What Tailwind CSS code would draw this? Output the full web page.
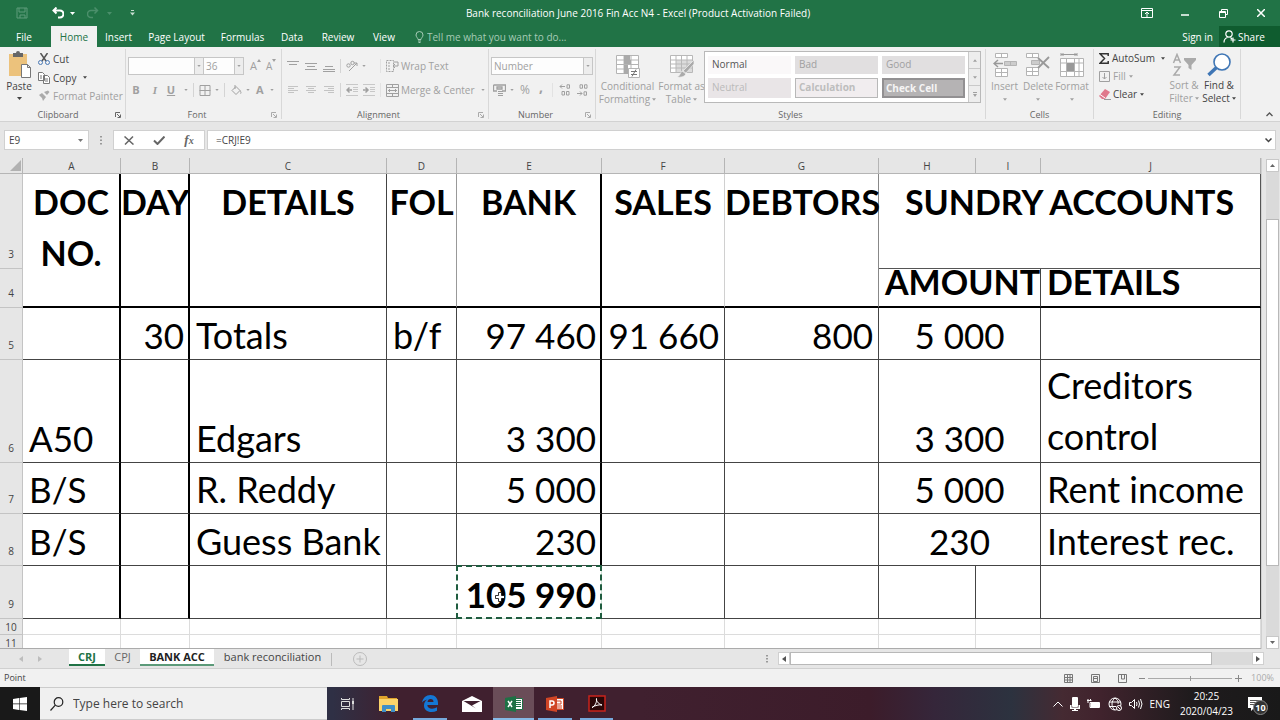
<!DOCTYPE html>
<html lang="en">
<head>
  <meta charset="UTF-8">
  <meta name="viewport" content="width=device-width, initial-scale=1.0">
  <title>Bank reconciliation June 2016 Fin Acc N4 - Excel</title>
  <script src="https://cdn.jsdelivr.net/npm/@tailwindcss/browser@4"></script>
</head>
<body class="h-screen flex flex-col overflow-hidden bg-[#e6e6e6] text-[11px] leading-[14px] text-[#444] font-['Open_Sans','Noto_Sans',sans-serif]">
  <!-- Shared icons -->
  <svg class="hidden">
    <symbol id="caret" viewBox="0 0 5 3"><path d="M0 0h5L2.5 3z" fill="currentColor"/></symbol>
    <symbol id="launcher" viewBox="0 0 6 6"><path d="M.5 5V.5H5M2 2l3 3M5.500 2.500v3h-3" fill="none" stroke="currentColor"/></symbol>
  </svg>

  <!-- Title bar -->
  <header class="bg-[#217346] text-white shrink-0">
    <div class="h-[26px] flex items-center">
      <div class="flex-1 flex items-center pl-4">
        <button aria-label="Save" class="w-[36px] text-[#5f9c7b]">
          <svg class="w-3 h-3" viewBox="0 0 12 12" fill="none" stroke="currentColor"><path d="M1 1h10v10H1zM3 1v4h6V1M4 11V8h5v3"/></svg>
        </button>
        <button aria-label="Undo" class="w-[18px]">
          <svg class="w-3 h-3" viewBox="0 0 12 12" fill="none" stroke="currentColor" stroke-width="2"><path d="M4.500 .5L1.500 3.500l3 3M1.500 3.500H8a3 3 0 0 1 0 7H6"/></svg>
        </button>
        <svg class="w-[5px] h-[3px]"><use href="#caret"/></svg>
        <button aria-label="Redo" class="w-[20px] ml-3 text-[#4b8f6b]">
          <svg class="w-3 h-3" viewBox="0 0 12 12" fill="none" stroke="currentColor" stroke-width="1.500"><path d="M7.500 .5l3 3-3 3M10.500 3.500H4a3 3 0 0 0 0 7h2"/></svg>
        </button>
        <svg class="w-[5px] h-[3px] text-[#4b8f6b]"><use href="#caret"/></svg>
        <button aria-label="Customize Quick Access Toolbar" class="ml-[18px] text-[#c5dccf]">
          <svg class="w-[5px] h-[6px]" viewBox="0 0 5 6" fill="currentColor"><path d="M1 0h3v1H1zM0 2.500h5L2.500 5.500z"/></svg>
        </button>
      </div>
      <h1 class="text-[10px] pr-5">Bank reconciliation June 2016 Fin Acc N4 - Excel (Product Activation Failed)</h1>
      <div class="flex-1 flex justify-end items-center">
        <button aria-label="Ribbon Display Options" class="w-[38px]">
          <svg class="w-3 h-3 mx-auto" viewBox="0 0 12 12" fill="none" stroke="currentColor"><path d="M.5 1.500h11v9H.5zM.5 3.500h11M6 10V5M4 7l2-2 2 2"/></svg>
        </button>
        <button aria-label="Minimize" class="w-[38px]">
          <svg class="w-2 h-3 mx-auto" viewBox="0 0 8 12" stroke="currentColor" stroke-width="1.500"><path d="M0 8h8"/></svg>
        </button>
        <button aria-label="Restore" class="w-[38px]">
          <svg class="w-[9px] h-[9px] mx-auto" viewBox="0 0 9 9" fill="none" stroke="currentColor"><path d="M.5 2.500h6v6h-6zM.5 3.500h6M2.500 2V.5h6v5H7"/></svg>
        </button>
        <button aria-label="Close" class="w-[38px]">
          <svg class="w-2 h-2 mx-auto" viewBox="0 0 8 8" stroke="currentColor" stroke-width="1.500"><path d="M0 0l8 8M8 0L0 8"/></svg>
        </button>
      </div>
    </div>

    <!-- Ribbon tabs -->
    <nav class="h-[21px] flex items-stretch text-[10px]">
      <button class="w-[51px] pr-[3px]">File</button>
      <button class="w-[46px] bg-[#f1f1f1] text-[#217346]">Home</button>
      <button class="w-[43px]">Insert</button>
      <button class="w-[73px] whitespace-nowrap">Page Layout</button>
      <button class="w-[59px]">Formulas</button>
      <button class="w-[40px]">Data</button>
      <button class="w-[52px]">Review</button>
      <button class="w-[40px]">View</button>
      <label class="flex items-center flex-1 pl-[11px] text-[#a6cbb6]">
        <svg class="w-[9px] h-3 mr-[3px]" viewBox="0 0 9 12" fill="none" stroke="currentColor"><path d="M3 8.500C3 7 1 6 1 4a3.500 3.500 0 0 1 7 0c0 2-2 3-2 4.500zM3 10h3M3.500 11.500h2"/></svg>
        <input type="text" aria-label="Tell me" placeholder="Tell me what you want to do..." class="w-[180px] outline-none placeholder:text-[#a6cbb6]">
      </label>
      <button class="px-[6px]">Sign in</button>
      <button class="w-[61px] bg-[#0f5c2f] flex items-center gap-[2px] pl-1">
        <svg class="w-[13px] h-[13px]" viewBox="0 0 13 13" fill="none" stroke="currentColor" stroke-width="1.200"><circle cx="6" cy="4" r="3.200"/><path d="M1 12.500c0-3 1.500-4.500 3.500-5M7.500 7.500L9 9M10 7.500v5M7.500 10h5"/></svg>
        Share
      </button>
    </nav>
  </header>

  <!-- Ribbon -->
  <section class="h-[75px] shrink-0 flex bg-[#f1f1f1] border-b border-[#d2d2d2] text-[#a0a0a0] whitespace-nowrap">
    <!-- Clipboard -->
    <div class="w-[125px] flex flex-col my-[2px]">
      <div class="flex-1 flex">
        <button class="w-[38px] pt-[2px] flex flex-col items-center text-[#444]">
          <svg class="w-6 h-7" viewBox="0 0 24 28"><path fill="#ecc27c" d="M2 3h18v22H2z"/><path fill="#666" d="M6 2h3a2 2 0 0 1 4 0h3v4H6z"/><path fill="#fff" stroke="#777" d="M14.500 13.500h6l3 3v10h-9zM20.500 13.500v3h3"/></svg>
          <span class="text-[10px]">Paste</span>
          <svg class="w-[5px] h-[3px] mt-1"><use href="#caret"/></svg>
        </button>
        <div class="flex flex-col pt-px text-[10px]">
          <button class="h-[18px] flex items-center gap-[3px] text-[#444]">
            <svg class="w-3 h-3" viewBox="0 0 12 12" fill="none"><path d="M2.500 0L8 8M9.500 0L4 8" stroke="#555" stroke-width="1.500"/><circle cx="2.500" cy="9.500" r="2" stroke="#4a79b5"/><circle cx="9.500" cy="9.500" r="2" stroke="#4a79b5"/></svg>
            Cut
          </button>
          <button class="h-[19px] flex items-center gap-[3px] text-[#444]">
            <svg class="w-3 h-3" viewBox="0 0 12 12" fill="#fff" stroke="#777"><path d="M.5 .5h4l2 2v6h-6zM2 4h2M2 6h2M5.500 3.500h4l2 2v6h-6zM7 7h3M7 9h3"/></svg>
            Copy
            <svg class="w-1 h-[3px] ml-1"><use href="#caret"/></svg>
          </button>
          <button class="h-[18px] flex items-center gap-[3px]">
            <svg class="w-3 h-3" viewBox="0 0 12 12" fill="#aaa"><path d="M1 5l3-2 4 4-3 4-1-3zM6 2l3 3 2.500-3L10 .5z"/></svg>
            Format Painter
          </button>
        </div>
      </div>
      <div class="h-2 flex items-center pr-1 text-[9px] text-[#666]"><span class="flex-1 text-center pl-[1px]">Clipboard</span><svg class="w-[6px] h-[6px]"><use href="#launcher"/></svg></div>
    </div>

    <!-- Font -->
    <div class="w-[156px] flex flex-col border-l border-[#d8d8d8] my-[2px]">
      <div class="flex-1 pl-[2px]">
        <div class="h-[18px] mt-2 flex items-center text-[10px]">
          <span class="flex items-center w-[76px] h-[18px] border border-[#c6c6c6] bg-[#fdfdfd]">
            <select aria-label="Font" class="appearance-none flex-1 outline-none"><option></option></select>
            <span class="w-[9px] h-full bg-[#ededed] border-l border-[#c6c6c6] flex items-center justify-center"><svg class="w-1 h-[2px]"><use href="#caret"/></svg></span>
          </span>
          <span class="flex items-center w-[40px] h-[18px] border border-l-0 border-[#c6c6c6] bg-[#fdfdfd]">
            <select aria-label="Font size" class="appearance-none flex-1 pl-[2px] outline-none"><option>36</option></select>
            <span class="w-[9px] h-full bg-[#ededed] border-l border-[#c6c6c6] flex items-center justify-center"><svg class="w-1 h-[2px]"><use href="#caret"/></svg></span>
          </span>
          <button class="ml-[6px] flex text-[11px]" aria-label="Increase font size">A<svg class="w-[4px] h-[3px]" viewBox="0 0 4 3" fill="currentColor"><path d="M0 3l2-3 2 3z"/></svg></button>
          <button class="ml-[5px] flex text-[10px]" aria-label="Decrease font size">A<svg class="w-[4px] h-[3px]" viewBox="0 0 4 3" fill="currentColor"><path d="M0 0h4L2 3z"/></svg></button>
        </div>
        <div class="h-[16px] mt-[7px] flex items-center">
          <button class="w-[18px] pr-[2px] font-bold">B</button>
          <button class="w-[18px] font-bold italic font-['Liberation_Serif',serif]">I</button>
          <button class="w-[16px] pr-[2px] font-bold underline">U</button>
          <svg class="w-1 h-[2px] ml-1"><use href="#caret"/></svg>
          <span class="w-px h-[14px] bg-[#d4d4d4] mx-[5px]"></span>
          <svg class="w-[12px] h-[11px]" viewBox="0 0 11 11" fill="none" stroke="currentColor"><path d="M.5 .5h10v10H.5zM5.500 0v11M0 5.500h11"/></svg>
          <svg class="w-1 h-[2px] ml-1"><use href="#caret"/></svg>
          <span class="w-px h-[14px] bg-[#d4d4d4] ml-[5px] mr-[6px]"></span>
          <svg class="w-[11px] h-[11px]" viewBox="0 0 11 11" fill="none" stroke="currentColor"><path d="M1 5.500l4-4 4 4-4 4zM4 4V0M9 5.500c1 1.500 1.500 3 .5 3"/></svg>
          <svg class="w-1 h-[2px] ml-[4px]"><use href="#caret"/></svg>
          <button class="ml-[6px] font-bold" aria-label="Font color">A</button>
          <svg class="w-1 h-[2px] ml-[6px]"><use href="#caret"/></svg>
        </div>
      </div>
      <div class="h-2 flex items-center pr-1 text-[9px] text-[#666]"><span class="flex-1 text-center pr-[3px]">Font</span><svg class="w-[6px] h-[6px] text-[#aaa]"><use href="#launcher"/></svg></div>
    </div>

    <!-- Alignment -->
    <div class="w-[207px] flex flex-col border-l border-[#d8d8d8] my-[2px]">
      <div class="flex-1 pl-[5px] text-[10px]">
        <div class="h-[18px] mt-2 flex items-center">
          <svg class="w-3 h-3" viewBox="0 0 12 12" stroke="currentColor"><path d="M0 1.500h12M2 4.500h8"/></svg>
          <svg class="w-3 h-3 ml-[6px]" viewBox="0 0 12 12" stroke="currentColor"><path d="M0 3.500h12M2 6.500h8M0 9.500h12"/></svg>
          <svg class="w-3 h-3 ml-[6px]" viewBox="0 0 12 12" stroke="currentColor"><path d="M2 6.500h8M0 9.500h12M0 11.500h12"/></svg>
          <span class="w-px h-[14px] bg-[#d4d4d4] mx-[5px]"></span>
          <svg class="w-3 h-3" viewBox="0 0 12 12" fill="none" stroke="currentColor"><path d="M3 11l8-8M8 3h3v3"/><circle cx="2.500" cy="5.500" r="1.700"/><circle cx="6.500" cy="3" r="1.700"/></svg>
          <svg class="w-1 h-[2px] ml-1"><use href="#caret"/></svg>
          <span class="w-px h-[14px] bg-[#e2e2e2] ml-[14px] mr-[5px]"></span>
          <button class="flex items-center gap-[2px]">
            <svg class="w-[13px] h-3" viewBox="0 0 13 12" fill="none" stroke="currentColor"><path d="M.5 .5h7v11h-7zM2 3h3M2 6h3M2 9h3" stroke-dasharray="2 1"/><path d="M8 2h4v4H7M9 4L7 6l2 2"/></svg>
            Wrap Text
          </button>
        </div>
        <div class="h-[16px] mt-[7px] flex items-center">
          <svg class="w-3 h-3" viewBox="0 0 12 12" stroke="#c4c4c4"><path d="M1 2.500h10M1 4.500h6M1 6.500h10M1 8.500h6"/></svg>
          <svg class="w-3 h-3 ml-[6px]" viewBox="0 0 12 12" stroke="#c4c4c4"><path d="M1 2.500h10M3 4.500h6M1 6.500h10M3 8.500h6"/></svg>
          <svg class="w-3 h-3 ml-[6px]" viewBox="0 0 12 12" stroke="#c4c4c4"><path d="M1 2.500h10M5 4.500h6M1 6.500h10M5 8.500h6"/></svg>
          <span class="w-px h-[14px] bg-[#d4d4d4] mx-[5px]"></span>
          <svg class="w-3 h-3" viewBox="0 0 12 12" fill="none" stroke="currentColor"><path d="M0 .5h12M7 3.500h5M7 5.500h5M7 7.500h5M0 11.500h12" stroke="#c8c8c8"/><path d="M6 6H1M3.500 3.500L1 6l2.500 2.500" stroke-width="1.500"/></svg>
          <svg class="w-3 h-3 ml-[5px]" viewBox="0 0 12 12" fill="none" stroke="currentColor"><path d="M0 .5h12M7 3.500h5M7 5.500h5M7 7.500h5M0 11.500h12" stroke="#c8c8c8"/><path d="M0 6h5M2.500 3.500L5 6 2.500 8.500" stroke-width="1.500"/></svg>
          <span class="w-px h-[14px] bg-[#e2e2e2] mx-[5px]"></span>
          <button class="flex items-center gap-[2px]">
            <svg class="w-[13px] h-[13px]" viewBox="0 0 13 13" fill="none" stroke="currentColor"><path d="M.5 .5h12v12H.5zM0 3.500h13M0 9.500h13M6.500 0v3.500M6.500 9.500V13M2 6.500h9M4 5L2.500 6.500 4 8M9 5l1.500 1.500L9 8"/></svg>
            Merge &amp; Center
            <svg class="w-1 h-[2px] ml-1"><use href="#caret"/></svg>
          </button>
        </div>
      </div>
      <div class="h-2 flex items-center pr-1 text-[9px] text-[#666]"><span class="flex-1 text-center pr-[3px]">Alignment</span><svg class="w-[6px] h-[6px] text-[#aaa]"><use href="#launcher"/></svg></div>
    </div>

    <!-- Number -->
    <div class="w-[107px] flex flex-col border-l border-[#d8d8d8] my-[2px]">
      <div class="flex-1 pl-[2px]">
        <div class="h-[18px] mt-2 flex items-center text-[10px]">
          <span class="flex items-center w-[102px] h-[18px] border border-[#c6c6c6] bg-[#fdfdfd]">
            <select aria-label="Number format" class="appearance-none flex-1 pl-[2px] outline-none"><option>Number</option></select>
            <span class="w-[9px] h-full bg-[#ededed] border-l border-[#c6c6c6] flex items-center justify-center"><svg class="w-1 h-[2px]"><use href="#caret"/></svg></span>
          </span>
        </div>
        <div class="h-[16px] mt-[7px] pl-[2px] flex items-center">
          <svg class="w-[13px] h-3" viewBox="0 0 13 12" fill="none" stroke="currentColor"><path d="M.5 1h12v6H9M.5 1v6H4M4 3h5v2H4z" stroke-width="1.300"/><path d="M5 7.500h5M5 9.500h5M5 11.500h5"/></svg>
          <svg class="w-1 h-[2px] ml-1"><use href="#caret"/></svg>
          <button class="ml-[6px] text-[12px]">%</button>
          <button class="ml-[9px] text-[14px] font-bold leading-[4px] pb-[6px]">,</button>
          <span class="w-px h-[14px] bg-[#e2e2e2] ml-[9px] mr-[6px]"></span>
          <svg class="w-3 h-3" viewBox="0 0 12 12" fill="none" stroke="currentColor"><path d="M6 2.500H1M3 .5l-2 2 2 2M8 .8h2.500v3.400H8zM3 7.500h2.500v3.500H3zM7.500 7.500H10v3.500H7.500z"/></svg>
          <svg class="w-3 h-3 ml-[5px]" viewBox="0 0 12 12" fill="none" stroke="currentColor"><path d="M1 9.500h5M4 7.500l2 2-2 2M8 7.800h2.500v3.400H8zM4 .8h2.500v3.400H4zM8.500 .8H11v3.400H8.500z"/></svg>
        </div>
      </div>
      <div class="h-2 flex items-center pr-1 text-[9px] text-[#666]"><span class="flex-1 text-center pr-[3px]">Number</span><svg class="w-[6px] h-[6px] text-[#aaa]"><use href="#launcher"/></svg></div>
    </div>

    <!-- Styles -->
    <div class="flex-1 flex flex-col border-l border-[#d8d8d8] my-[2px]">
      <div class="flex-1 flex text-[10px] leading-[13px]">
        <button class="w-[63px] pt-[5px] flex flex-col items-center">
          <svg class="w-[26px] h-[24px]" viewBox="0 0 26 24" fill="#fff" stroke="#b4b4b4"><path d="M1.500 1.500h22v18h-22zM1.500 6h22M1.500 10.500h22M1.500 15h22M9 1v19M16 1v19"/><path fill="#aaa" stroke="none" d="M9 1h6v5H9zM9 6h7v4H9zM9 11h4v4H9zM9 15h6v5H9z"/><path d="M13.500 14.500h11v9h-11z"/><path d="M16 17.500h6M16 20.500h6M21 15.500l-4 7" stroke="#777"/></svg>
          <span class="mt-[2px]">Conditional</span>
          <span class="flex items-center gap-[2px]">Formatting <svg class="w-1 h-[3px]"><use href="#caret"/></svg></span>
        </button>
        <button class="w-[45px] pt-[5px] flex flex-col items-center">
          <svg class="w-[26px] h-[24px]" viewBox="0 0 26 24" fill="#fff" stroke="#b8b8b8"><path d="M1.500 1.500h22v17h-22z"/><path fill="#dcdcdc" stroke="none" d="M7 6h16v12H7z"/><path d="M1.500 6h22M1.500 10h22M1.500 14h22M7 1v18M12.500 1v18M18 1v18" fill="none"/><path fill="#aaa" stroke="#f1f1f1" stroke-width=".7" d="M25 6v4l-8 9-3-2zM13 17l4 3c-2 3-5 3.500-9 3 3-1 3-4 5-6z"/></svg>
          <span class="mt-[2px]">Format as</span>
          <span class="flex items-center gap-[2px]">Table <svg class="w-1 h-[3px]"><use href="#caret"/></svg></span>
        </button>
        <div class="flex-1 h-[52px] mt-[2px] mr-1 flex border border-[#b9b9b9] bg-white">
          <div class="flex-1 grid grid-cols-3 gap-x-1 gap-y-1 px-[3px] pt-1 pb-1">
            <button class="bg-[#faf8f9] pl-1 text-left text-[#555]">Normal</button>
            <button class="bg-[#e1dfe0] pl-1 text-left">Bad</button>
            <button class="bg-[#e1dfe0] pl-1 text-left">Good</button>
            <button class="bg-[#e9e5e7] pl-1 text-left text-[#bababa]">Neutral</button>
            <button class="bg-[#f1edef] pl-[3px] text-left font-bold text-[#bdbdbd] border border-[#b8b8b8]">Calculation</button>
            <button class="bg-[#b5b3b4] pl-[2px] text-left font-bold text-[#f5f5f5] border-2 border-[#929092] leading-[12px]">Check Cell</button>
          </div>
          <div class="w-3 flex flex-col bg-[#ededed] border-l border-[#c9c9c9] divide-y divide-[#c9c9c9]">
            <button aria-label="Previous styles" class="flex-1 flex items-center justify-center"><svg class="w-1 h-[3px] rotate-180"><use href="#caret"/></svg></button>
            <button aria-label="Next styles" class="flex-1 flex items-center justify-center"><svg class="w-1 h-[3px]"><use href="#caret"/></svg></button>
            <button aria-label="More styles" class="flex-1 flex items-center justify-center"><svg class="w-1 h-[5px]" viewBox="0 0 4 5" fill="currentColor"><path d="M0 0h4v1H0zM0 2h4L2 5z"/></svg></button>
          </div>
        </div>
      </div>
      <div class="h-2 flex items-center justify-center text-[9px] text-[#666]">Styles</div>
    </div>

    <!-- Cells -->
    <div class="w-[108px] flex flex-col border-l border-[#d8d8d8] my-[2px]">
      <div class="flex-1 flex pl-[2px] pt-1 text-[10px]">
        <button class="w-[33px] flex flex-col items-center">
          <svg class="w-6 h-6" viewBox="0 0 24 24" fill="#fff" stroke="#b4b4b4"><path d="M2.500 .5h12v4h-12zM8.500 .5v4M2.500 15.500h12v8h-12zM8.500 15v9M2.500 19.500h12"/><path fill="#ccc" d="M11.500 8.500h12v4h-12zM17.500 8v5"/><path d="M10 10.500H1M5 7l-4 3.500L5 14" stroke="#999" stroke-width="1.500" fill="none"/></svg>
          <span class="mt-[2px]">Insert</span>
          <svg class="w-1 h-[3px] mt-[5px]"><use href="#caret"/></svg>
        </button>
        <button class="w-[34px] flex flex-col items-center">
          <svg class="w-6 h-6" viewBox="0 0 24 24" fill="#fff" stroke="#b4b4b4"><path d="M.5 .5h12v4H.5zM6.500 .5v4M.5 14.500h12v8H.5zM6.500 14v9M.5 18.500h12"/><path fill="#ccc" d="M5.500 7.500h8v4h-8z"/><path d="M12 5l11 10M23 4L12 15" stroke="#999" stroke-width="1.800" fill="none"/></svg>
          <span class="mt-[2px]">Delete</span>
          <svg class="w-1 h-[3px] mt-[5px]"><use href="#caret"/></svg>
        </button>
        <button class="w-[34px] flex flex-col items-center">
          <svg class="w-6 h-6" viewBox="0 0 24 24" fill="#fff" stroke="#b4b4b4"><path d="M.5 5.500h23v18H.5zM.5 10h23M.5 18.500h23M6.500 5v18M14.500 5v18M19 5v18"/><path fill="#999" stroke="none" d="M7 10h7v8H7z"/><path d="M1 1.500h16M1 0v3M17 0v3M3.500 0L2 1.500 3.500 3M14.500 0L16 1.500 14.500 3" stroke="#999" fill="none"/></svg>
          <span class="mt-[2px]">Format</span>
          <svg class="w-1 h-[3px] mt-[5px]"><use href="#caret"/></svg>
        </button>
      </div>
      <div class="h-2 flex items-center justify-center text-[9px] text-[#666]">Cells</div>
    </div>

    <!-- Editing -->
    <div class="w-[148px] flex flex-col border-x border-[#d8d8d8] my-[2px]">
      <div class="flex-1 flex pl-[5px] text-[10px]">
        <div class="w-[69px] flex flex-col">
          <button class="h-[18px] flex items-center text-[#444]">
            <svg class="w-[10px] h-[11px] mr-[3px]" viewBox="0 0 10 11" fill="none" stroke="#333" stroke-width="1.500"><path d="M9.200 3V.8H1l4.500 4.700L1 10.200h8.200V8"/></svg>
            AutoSum
            <svg class="w-1 h-[3px] ml-[6px]"><use href="#caret"/></svg>
          </button>
          <button class="h-[18px] flex items-center">
            <svg class="w-[11px] h-[11px] mr-[3px]" viewBox="0 0 11 11" fill="none" stroke="currentColor"><path d="M.5 .5h10v10H.5zM5.500 2v6M3.500 6l2 2 2-2"/></svg>
            Fill
            <svg class="w-1 h-[3px] ml-[3px]"><use href="#caret"/></svg>
          </button>
          <button class="h-[18px] flex items-center text-[#444]">
            <svg class="w-[12px] h-[11px] mr-[2px]" viewBox="0 0 12 11"><path fill="#e0798c" d="M6 0l5 3-5 7H3L0 7z"/><path d="M1 5.500l5 3.500" stroke="#fff"/><path d="M5 10.500h7" stroke="#999"/></svg>
            Clear
            <svg class="w-1 h-[3px] ml-[3px]"><use href="#caret"/></svg>
          </button>
        </div>
        <button class="w-[32px] pt-1 flex flex-col items-center leading-[13px]">
          <svg class="w-6 h-6 mb-[2px]" viewBox="0 0 24 24" fill="none" stroke="#aaa" stroke-width="1.500"><path d="M1.500 10L5 1.500 8.500 10M2.800 7h4.400M2 14h6l-6 8h6"/><path fill="#aaa" stroke="none" d="M12 5h12v2l-4.500 5v5l-3-2v-3L12 7z"/></svg>
          <span>Sort &amp;</span>
          <span class="flex items-center gap-[2px]">Filter <svg class="w-1 h-[3px]"><use href="#caret"/></svg></span>
        </button>
        <button class="w-[38px] pt-1 flex flex-col items-center leading-[13px] text-[#444]">
          <svg class="w-6 h-6 mb-[2px]" viewBox="0 0 24 24" fill="#fff" stroke="#3f76b5"><path d="M9.500 14.500L1.500 22" stroke-width="3.500"/><circle cx="15" cy="9" r="8" stroke-width="1.600"/></svg>
          <span>Find &amp;</span>
          <span class="flex items-center gap-[2px]">Select <svg class="w-1 h-[3px]"><use href="#caret"/></svg></span>
        </button>
      </div>
      <div class="h-2 flex items-center justify-center text-[9px] text-[#666]">Editing</div>
    </div>
    <div class="w-[39px] flex items-end justify-end pb-1 pr-[7px]">
      <button aria-label="Collapse the Ribbon" class="text-[#555]"><svg class="w-[7px] h-[5px]" viewBox="0 0 7 5" fill="none" stroke="currentColor" stroke-width="1.300"><path d="M.5 4l3-3 3 3"/></svg></button>
    </div>
  </section>

  <!-- Formula bar -->
  <section class="h-[36px] shrink-0 flex items-center pl-1 pr-1 text-[10px]">
    <div class="w-[85px] h-5 flex items-center bg-white border border-[#d0d0d0]">
      <input type="text" aria-label="Name Box" value="E9" class="w-[73px] pl-1 outline-none">
      <svg class="w-[5px] h-[3px] text-[#777]"><use href="#caret"/></svg>
    </div>
    <svg class="w-[2px] h-[9px] mx-[11px]" viewBox="0 0 2 9" fill="#999"><path d="M0 0h2v1.500H0zM0 3.500h2V5H0zM0 7h2v1.500H0z"/></svg>
    <div class="w-[92px] h-5 flex items-center bg-white border border-[#d0d0d0] text-[#666]">
      <button aria-label="Cancel" class="w-[30px]"><svg class="w-[10px] h-[9px] mx-auto" viewBox="0 0 10 9" fill="none" stroke="currentColor" stroke-width="1.500"><path d="M.5 .5l9 8M9 .5L1 8.500"/></svg></button>
      <button aria-label="Enter" class="w-[30px]"><svg class="w-3 h-[9px] mx-auto" viewBox="0 0 12 9" fill="none" stroke="currentColor" stroke-width="2"><path d="M1 4.500L4.500 8l7-7.500"/></svg></button>
      <button aria-label="Insert Function" class="w-[30px] font-['Liberation_Serif',serif] font-bold italic text-[13px]">f<span class="text-[10px]">x</span></button>
    </div>
    <div class="flex-1 h-5 ml-[2px] flex items-center bg-white border border-[#d0d0d0]">
      <input type="text" aria-label="Formula Bar" value="=CRJ!E9" class="flex-1 pl-2 outline-none">
      <svg class="w-[7px] h-[5px] mr-[3px]" viewBox="0 0 7 5" fill="none" stroke="currentColor" stroke-width="1.500"><path d="M.5 .5l3 3 3-3"/></svg>
    </div>
  </section>

  <!-- Worksheet -->
  <main class="flex-1 min-h-0 flex">
    <div class="flex-1 overflow-hidden border-b border-[#ababab] bg-white">
      <table class="w-full table-fixed border-separate border-spacing-0 font-['Lato',sans-serif] text-[35px] leading-[48px] text-black whitespace-nowrap [&_tbody_th]:bg-[#e6e6e6] [&_tbody_th]:align-bottom [&_tbody_th]:text-[10px] [&_tbody_th]:leading-[14px] [&_tbody_th]:font-normal [&_tbody_th]:text-[#444] [&_tbody_th]:border-r [&_tbody_th]:border-b [&_tbody_th]:border-[#c4c4c4] [&_tbody_th]:font-['Open_Sans',sans-serif]">
        <colgroup>
          <col class="w-[23px]"><col class="w-[98px]"><col class="w-[69px]"><col class="w-[197px]"><col class="w-[70px]"><col class="w-[145px]"><col class="w-[123px]"><col class="w-[154px]"><col class="w-[97px]"><col class="w-[65px]"><col>
        </colgroup>
        <thead class="font-['Open_Sans',sans-serif] text-[10px] leading-[14px] text-[#444] bg-[#e6e6e6] [&_th]:font-normal [&_th]:border-b [&_th]:border-r [&_th]:border-[#b5b5b5]">
          <tr class="h-4">
            <th aria-label="Select all"><svg class="w-[11px] h-[11px] ml-[10px]" viewBox="0 0 11 11"><path d="M11 0v11H0z" fill="#b1b1b1"/></svg></th>
            <th>A</th><th>B</th><th>C</th><th>D</th><th>E</th><th>F</th><th>G</th><th>H</th><th>I</th><th>J</th>
          </tr>
        </thead>
        <tbody>
          <tr class="h-[95px] align-top text-center text-[34px] font-bold leading-[51px] [&_td]:pt-[2px]">
            <th class="pb-[7px]">3</th>
            <td rowspan="2" class="border-r-2 border-b-2 border-black">DOC<br>NO.</td>
            <td rowspan="2" class="border-r-2 border-b-2 border-black">DAY</td>
            <td rowspan="2" class="border-r border-b-2 border-[#444] border-b-black">DETAILS</td>
            <td rowspan="2" class="border-r border-b-2 border-[#999] border-b-black">FOL</td>
            <td rowspan="2" class="border-r-2 border-b-2 border-black">BANK</td>
            <td rowspan="2" class="border-r border-b-2 border-[#d0d0d0] border-b-black">SALES</td>
            <td rowspan="2" class="border-r border-b-2 border-[#888] border-b-black">DEBTORS</td>
            <td colspan="3" class="border-r border-b border-[#555]">SUNDRY ACCOUNTS</td>
          </tr>
          <tr class="h-[39px] text-[34px] font-bold">
            <th class="pb-[7px]">4</th>
            <td colspan="2" class="border-r border-b-2 border-[#444] border-b-black"><div class="h-[37px] pl-[6px] flex items-end">AMOUNT</div></td>
            <td class="border-r border-b-2 border-[#444] border-b-black"><div class="h-[37px] pl-[6px] flex items-end">DETAILS</div></td>
          </tr>
          <tr class="h-[52px] align-bottom">
            <th class="pb-[7px]">5</th>
            <td class="border-r-2 border-b border-[#444] border-r-black"></td>
            <td class="border-r-2 border-b border-[#444] border-r-black text-right pr-1">30</td>
            <td class="border-r border-b border-[#444] pl-[6px] text-[36px]">Totals</td>
            <td class="border-r border-b border-[#444] pl-[6px] text-[36px]">b/f</td>
            <td class="border-r-2 border-b border-[#444] border-r-black text-right pr-1">97 460</td>
            <td class="border-r border-b border-[#444] text-right pr-[5px]">91 660</td>
            <td class="border-r border-b border-[#444] text-right pr-[5px]">800</td>
            <td colspan="2" class="border-r border-b border-[#444] text-center">5 000</td>
            <td class="border-r border-b border-[#444]"></td>
          </tr>
          <tr class="h-[103px] align-bottom">
            <th class="pb-[7px]">6</th>
            <td class="border-r-2 border-b border-[#444] border-r-black pl-[6px]">A50</td>
            <td class="border-r-2 border-b border-[#444] border-r-black"></td>
            <td class="border-r border-b border-[#444] pl-[6px] text-[36px]">Edgars</td>
            <td class="border-r border-b border-[#444]"></td>
            <td class="border-r-2 border-b border-[#444] border-r-black text-right pr-1">3 300</td>
            <td class="border-r border-b border-[#444]"></td>
            <td class="border-r border-b border-[#444]"></td>
            <td colspan="2" class="border-r border-b border-[#444] text-center">3 300</td>
            <td class="border-r border-b border-[#444] pl-[6px] text-[36px] leading-[51px]">Creditors<br>control</td>
          </tr>
          <tr class="h-[51px] align-bottom">
            <th class="pb-[7px]">7</th>
            <td class="border-r-2 border-b border-[#444] border-r-black pl-[6px]">B/S</td>
            <td class="border-r-2 border-b border-[#444] border-r-black"></td>
            <td class="border-r border-b border-[#444] pl-[6px] text-[36px]">R. Reddy</td>
            <td class="border-r border-b border-[#444]"></td>
            <td class="border-r-2 border-b border-[#444] border-r-black text-right pr-1">5 000</td>
            <td class="border-r border-b border-[#444]"></td>
            <td class="border-r border-b border-[#444]"></td>
            <td colspan="2" class="border-r border-b border-[#444] text-center">5 000</td>
            <td class="border-r border-b border-[#444] pl-[6px] text-[36px]">Rent income</td>
          </tr>
          <tr class="h-[52px] align-bottom">
            <th class="pb-[7px]">8</th>
            <td class="border-r-2 border-b border-[#444] border-r-black pl-[6px]">B/S</td>
            <td class="border-r-2 border-b border-[#444] border-r-black"></td>
            <td class="border-r border-b border-[#444] pl-[6px] text-[36px]">Guess Bank</td>
            <td class="border-r border-b border-[#444]"></td>
            <td class="border-r-2 border-b border-[#444] border-r-black text-right pr-1">230</td>
            <td class="border-r border-b border-[#444]"></td>
            <td class="border-r border-b border-[#444]"></td>
            <td colspan="2" class="border-r border-b border-[#444] text-center">230</td>
            <td class="border-r border-b border-[#444] pl-[6px] text-[36px]">Interest rec.</td>
          </tr>
          <tr class="h-[53px] align-bottom">
            <th class="pb-[7px]">9</th>
            <td class="border-r-2 border-b border-[#444] border-r-black"></td>
            <td class="border-r-2 border-b border-[#444] border-r-black"></td>
            <td class="border-r border-b border-[#444]"></td>
            <td class="border-b border-[#444]"></td>
            <td class="relative border-r border-b border-[#cfe3d7] text-right pr-[5px] font-bold">105 990
              <!-- Copy marquee and cell cursor -->
              <span class="absolute -left-px -top-px -right-px -bottom-px border-2 border-dashed border-[#1f5c3f]"></span>
              <svg class="absolute left-[38px] top-[26px] w-[10px] h-[10px]" viewBox="0 0 10 10"><path d="M3.500 .5h3v3h3v3h-3v3h-3v-3h-3v-3h3z" fill="#fff" stroke="#000" stroke-width=".8"/></svg>
            </td>
            <td class="border-r border-b border-[#444]"></td>
            <td class="border-r border-b border-[#444]"></td>
            <td class="border-r border-b border-[#444]"></td>
            <td class="border-r border-b border-[#444]"></td>
            <td class="border-r border-b border-[#444]"></td>
          </tr>
          <tr class="h-4 [&_td]:border-r [&_td]:border-b [&_td]:border-[#dcdcdc]">
            <th>10</th><td></td><td></td><td></td><td></td><td></td><td></td><td></td><td></td><td></td><td></td>
          </tr>
          <tr class="h-4 [&_td]:border-r [&_td]:border-b [&_td]:border-[#dcdcdc]">
            <th>11</th><td></td><td></td><td></td><td></td><td></td><td></td><td></td><td></td><td></td><td></td>
          </tr>
        </tbody>
      </table>
    </div>
    <!-- Vertical scroll bar -->
    <div class="w-[19px] shrink-0 flex flex-col items-center pl-[2px] border-l border-[#d0d0d0]">
      <button aria-label="Scroll up" class="w-[13px] h-[13px] mt-px bg-white border border-[#c8c8c8] flex items-center justify-center text-[#666]"><svg class="w-[5px] h-[3px] rotate-180"><use href="#caret"/></svg></button>
      <div class="w-[13px] flex-1 bg-[#dadada] flex flex-col">
        <div class="flex-[47]"></div>
        <div class="flex-[348] bg-white border border-[#b8b8b8]"></div>
        <div class="flex-[70]"></div>
      </div>
      <button aria-label="Scroll down" class="w-[13px] h-[13px] bg-white border border-[#c8c8c8] flex items-center justify-center text-[#666]"><svg class="w-[5px] h-[3px]"><use href="#caret"/></svg></button>
    </div>
  </main>

  <!-- Sheet tabs -->
  <section class="h-[20px] shrink-0 flex items-start border-b border-[#d0d0d0]">
    <div class="w-[69px] h-full flex items-center pl-[19px] gap-[15px] text-[#bdbdbd]">
      <svg class="w-1 h-[6px]" viewBox="0 0 4 6" fill="currentColor"><path d="M4 0v6L0 3z"/></svg>
      <svg class="w-1 h-[6px]" viewBox="0 0 4 6" fill="currentColor"><path d="M0 0v6l4-3z"/></svg>
    </div>
    <button class="w-[36px] h-[17px] bg-white border-b-2 border-[#217346] text-[#217346] font-bold">CRJ</button>
    <button class="w-[35px] h-[17px] pb-[2px] text-[#666]">CPJ</button>
    <button class="w-[74px] h-[17px] bg-white border-b-2 border-[#5c9a79] text-[#222] font-bold whitespace-nowrap">BANK ACC</button>
    <button class="w-[117px] h-[17px] pb-[2px] whitespace-nowrap">bank reconciliation</button>
    <span class="w-px h-[13px] mt-1 bg-[#bbb]"></span>
    <button aria-label="New sheet" class="ml-[21px] mt-[3px]"><svg class="w-[14px] h-[14px]" viewBox="0 0 14 14" fill="none" stroke="#bbb"><circle cx="7" cy="7" r="6.500"/><path d="M3.500 7h7M7 3.500v7"/></svg></button>
    <div class="flex-1"></div>
    <svg class="w-[2px] h-2 mt-[6px] mr-[10px]" viewBox="0 0 2 8" fill="#999"><path d="M0 0h2v1.500H0zM0 3h2v1.500H0zM0 6h2v1.500H0z"/></svg>
    <!-- Horizontal scroll bar -->
    <div class="w-[486px] h-[13px] mt-[3px] mr-4 flex bg-[#dadada]">
      <button aria-label="Scroll left" class="w-3 bg-white border border-[#d0d0d0] flex items-center justify-center text-[#555]"><svg class="w-1 h-[6px]" viewBox="0 0 4 6" fill="currentColor"><path d="M4 0v6L0 3z"/></svg></button>
      <div class="flex-[421] bg-white border border-[#b8b8b8]"></div>
      <div class="flex-[40]"></div>
      <button aria-label="Scroll right" class="w-3 bg-white border border-[#d0d0d0] flex items-center justify-center text-[#555]"><svg class="w-1 h-[6px]" viewBox="0 0 4 6" fill="currentColor"><path d="M0 0v6l4-3z"/></svg></button>
    </div>
  </section>

  <!-- Status bar -->
  <section class="h-[18px] shrink-0 flex items-center bg-[#f1f1f1] pl-1 pr-[6px] text-[9px]">
    <span class="flex-1">Point</span>
    <svg class="w-[9px] h-[9px] mr-[18px]" viewBox="0 0 9 9" fill="none" stroke="#777"><path d="M.5 .5h8v8h-8zM0 3.500h9M0 6h9M3.500 0v9M6 0v9"/></svg>
    <svg class="w-[9px] h-[9px] mr-[18px]" viewBox="0 0 9 9" fill="none" stroke="#777"><path d="M.5 .5h8v8h-8zM2.500 2.500h4v5h-4zM3 4.500h3"/></svg>
    <svg class="w-[9px] h-[9px] mr-[12px]" viewBox="0 0 9 9" fill="none" stroke="#777"><path d="M.5 .5h8v8h-8zM3.500 .5v4.500h3V.5"/></svg>
    <svg class="w-[6px] h-[6px]" viewBox="0 0 6 6" stroke="#888"><path d="M0 3.500h6"/></svg>
    <input type="range" aria-label="Zoom" class="appearance-none w-[84px] h-px mx-[3px] bg-[#aaa] [&::-webkit-slider-thumb]:appearance-none [&::-webkit-slider-thumb]:w-px [&::-webkit-slider-thumb]:h-[5px] [&::-webkit-slider-thumb]:bg-[#999]">
    <svg class="w-[7px] h-[7px]" viewBox="0 0 7 7" stroke="#888"><path d="M0 3.500h7M3.500 0v7"/></svg>
    <span class="w-[32px] text-right text-[#aaa]">100%</span>
  </section>

  <!-- Taskbar -->
  <footer class="h-[33px] shrink-0 flex items-stretch text-white bg-[linear-gradient(90deg,#2f3045_26%,#40202f_31%,#40202f_50%,#3c1c2a_68%,#35263a_73%,#2c323f_79%,#452a32_83%,#40232d_86%,#1f1b1d_93%,#191919)]">
    <button aria-label="Start" class="w-[40px] bg-[#191919] flex items-center justify-center">
      <svg class="w-[14px] h-[14px]" viewBox="0 0 14 14" fill="#fff"><path d="M0 2l6-.9v5.500H0zM6.600 1L14 0v6.600H6.600zM0 7.300h6v5.600L0 12zM6.600 7.300H14V14l-7.400-1z"/></svg>
    </button>
    <label class="w-[287px] bg-[#f0f0f0] border-y border-[#ccc] flex items-center pl-[10px] text-[#333]">
      <svg class="w-[14px] h-[14px] mr-[9px]" viewBox="0 0 14 14" fill="none" stroke="#222" stroke-width="1.200"><circle cx="8.500" cy="5" r="4.300"/><path d="M5.300 8.200L.5 13.500"/></svg>
      <input type="text" aria-label="Search" placeholder="Type here to search" class="flex-1 text-[12px] outline-none placeholder:text-[#444]">
    </label>
    <button aria-label="Task View" class="w-[40px] flex items-center justify-center">
      <svg class="w-[15px] h-[14px]" viewBox="0 0 15 14" fill="none" stroke="#ddd"><path d="M1.500 4.500h8v5h-8zM1.500 1v1.500h8V1M1.500 13v-1.500h8V13M13 1v12"/><path d="M12 4h2v3h-2z" fill="#ddd" stroke="none"/></svg>
    </button>
    <button aria-label="File Explorer" class="w-[42px] flex items-center justify-center">
      <svg class="w-[19px] h-4" viewBox="0 0 19 16"><path fill="#e0a42c" d="M0 0h8l1 2h9v3H0z"/><path fill="#fbd46b" d="M0 3h19v12H0z"/><path fill="#3f8fc7" d="M3 16V10q0-1 1-1h11q1 0 1 1v6h-4v-3H7v3z"/></svg>
    </button>
    <button aria-label="Edge" class="relative w-[42px] flex items-center justify-center">
      <svg class="w-4 h-[17px]" viewBox="0 0 16 17"><path fill="#1477d4" d="M0 7.500C.8 3 4 0 8.500 0 13 0 16 3.300 16 8v2H5.300c.2 2.500 2.200 3.700 4.700 3.700 2 0 3.500-.5 5-1.400v3.500c-1.600.8-3.500 1.200-5.500 1.200-4.500 0-7.500-2.500-7.500-6.500 0-2.700 1.300-4.800 3.500-6C3.500 5 1.500 5.700 0 7.500zM5.500 7h6c0-1.800-1-3-2.900-3C6.800 4 5.700 5.300 5.500 7z"/></svg>
      <span class="absolute bottom-0 inset-x-1 h-[2px] bg-[#76a9dc]"></span>
    </button>
    <button aria-label="Mail" class="w-[42px] flex items-center justify-center">
      <svg class="w-5 h-4" viewBox="0 0 20 16"><path fill="#fff" d="M0 5l10-5 10 5v11H0z"/><path fill="#40202f" d="M1.500 5h17L10 9.500l4 3z"/></svg>
    </button>
    <button aria-label="Excel" class="relative w-[41px] flex items-center justify-center bg-[#6a4d58]">
      <svg class="w-[18px] h-4" viewBox="0 0 18 16"><path fill="#fff" stroke="#1e7145" d="M9 2.500h8.500v11H9z"/><path d="M11 4.500h5M11 6.500h5M11 8.500h5M11 10.500h5" stroke="#1e7145"/><path fill="#1e7145" d="M0 2l11-2v16L0 14z"/><path d="M3 5l4 6M7 5l-4 6" stroke="#fff" stroke-width="1.500"/></svg>
      <span class="absolute bottom-0 inset-x-0 h-[2px] bg-[#86b9e6]"></span>
    </button>
    <button aria-label="PowerPoint" class="relative w-[42px] flex items-center justify-center">
      <svg class="w-[18px] h-4" viewBox="0 0 18 16"><path fill="#fff" stroke="#d04525" d="M9 2.500h8.500v11H9z"/><path d="M11 10h5M11 12h5M11 5h4v3h-4" stroke="#d04525" fill="none"/><path fill="#d04525" d="M0 2l11-2v16L0 14z"/><path d="M4 12V5h2a2 2 0 0 1 0 4H4" stroke="#fff" stroke-width="1.500" fill="none"/></svg>
      <span class="absolute bottom-0 inset-x-1 h-[2px] bg-[#76a9dc]"></span>
    </button>
    <button aria-label="Acrobat Reader" class="relative w-[41px] flex items-center justify-center">
      <svg class="w-[18px] h-[17px]" viewBox="0 0 18 17"><path fill="#2a0808" stroke="#c8231c" stroke-width="1.500" d="M1 1h16v15H1z"/><path d="M8.500 3.500c-.5 2 1 5 5.500 6.500-3-.5-7 .3-10 2.500 3-1.500 5-5 4.500-9z" fill="none" stroke="#fff"/></svg>
      <span class="absolute bottom-0 inset-x-1 h-[2px] bg-[#76a9dc]"></span>
    </button>
    <div class="flex-1"></div>
    <div class="flex items-center gap-[7px] pr-[10px]">
      <svg class="w-[10px] h-[6px]" viewBox="0 0 10 6" fill="none" stroke="#fff"><path d="M.5 5.500L5 1l4.500 4.500"/></svg>
      <svg class="w-[10px] h-[14px]" viewBox="0 0 10 14" fill="#fff"><rect x="2" width="6" height="10" rx="1"/><path d="M0 8h1.500v2.500h7V8H10v4H6v1h2v1H2v-1h2v-1H0z"/></svg>
      <svg class="w-[14px] h-[10px]" viewBox="0 0 14 10" fill="none" stroke="#fff"><path d="M3 3.500h9.500v5H3zM1 0v4M3.500 0v2M0 1.500h4.500"/><path fill="#fff" d="M4 4.500h8v3.500H4z"/></svg>
      <svg class="w-[14px] h-[14px]" viewBox="0 0 14 14" fill="none" stroke="#fff"><circle cx="7" cy="7" r="6"/><path d="M1 5h12M1 9.500h7M7 1c-4 3-4 9 0 12M7 1c3 2 3.500 4 3 6"/><circle cx="11" cy="11" r="2.500" fill="#3b2028"/><path d="M9.500 9.500l3 3"/></svg>
      <svg class="w-[14px] h-3" viewBox="0 0 14 12" fill="none" stroke="#fff"><path d="M.5 4.500h2l3-3v9l-3-3h-2zM7.500 4q1 2 0 4M9.500 2.500q2 3.500 0 7M11.500 1q3 5 0 10"/></svg>
      <span class="text-[10px]">ENG</span>
      <div class="ml-[3px] text-center text-[10px] leading-[15px]"><div>20:25</div><div>2020/04/23</div></div>
      <button aria-label="Notifications" class="relative w-[22px] h-5 ml-[8px]">
        <svg class="w-[14px] h-[14px]" viewBox="0 0 14 14"><path fill="#fff" d="M0 0h14v11H6l-3 3v-3H0z"/><path d="M2 3.500h10M2 5.500h10M2 7.500h8" stroke="#555"/></svg>
        <span class="absolute left-[5px] top-[6px] w-[15px] h-[15px] rounded-full bg-[#333] border border-[#888] text-[9px] leading-[13px] font-bold text-center">10</span>
      </button>
    </div>
  </footer>
</body>
</html>
